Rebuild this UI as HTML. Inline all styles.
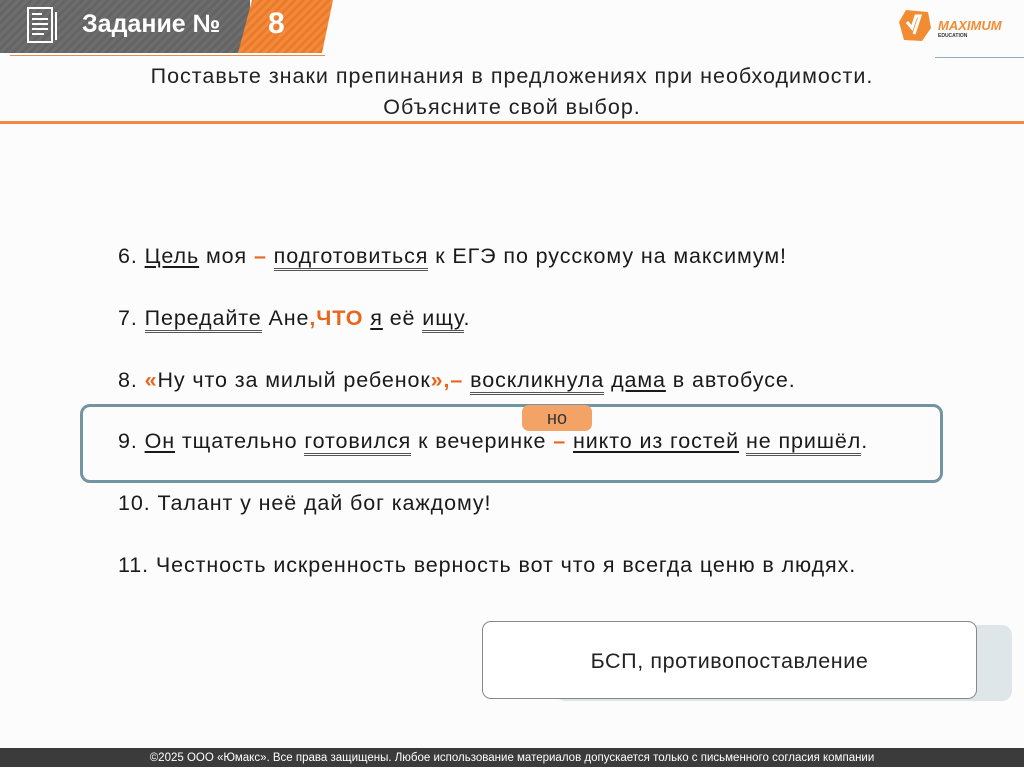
<!DOCTYPE html>
<html><head><meta charset="utf-8"><style>
body{margin:0;width:1024px;height:767px;position:relative;overflow:hidden;background:#fcfcfc;font-family:"Liberation Sans",sans-serif;color:#1a1a1a}
.abs{position:absolute}
.ln{position:absolute;left:118px;font-size:21.5px;letter-spacing:0.9px;white-space:nowrap;line-height:24px}
.s{text-decoration:underline;text-underline-offset:3px}
.p{border-bottom:3px double #555;padding-bottom:0}
.o{color:#e8661e;font-weight:bold}
</style></head><body>
<div class="abs" style="left:0;top:0;width:250px;height:53px;background:repeating-linear-gradient(135deg,#6d6d6d 0 3px,#646464 3px 6px)"></div>
<div class="abs" style="left:238px;top:0;width:95px;height:53px;background:repeating-linear-gradient(135deg,#f28a3c 0 3px,#ec7a2a 3px 6px);clip-path:polygon(14px 0,100% 0,84px 100%,0 100%)"></div>
<svg class="abs" style="left:26px;top:6px" width="36" height="40" viewBox="0 0 36 40"><rect x="2" y="2" width="24" height="34" fill="none" stroke="#fff" stroke-width="2"/><path d="M6 8h10M6 13h16M6 18h16M6 23h16M6 28h12" stroke="#fff" stroke-width="2"/><path d="M30 6v28" stroke="#fff" stroke-width="2"/></svg>
<div class="abs" style="left:82px;top:10px;font-size:25px;font-weight:bold;color:#fff">Задание №</div>
<div class="abs" style="left:268px;top:7px;font-size:30px;font-weight:bold;color:#fff">8</div>
<div class="abs" style="left:10px;top:55px;width:315px;height:1px;background:#ef8a45"></div>
<div class="abs" style="left:935px;top:57px;width:89px;height:1px;background:#8fb0c0"></div>
<svg class="abs" style="left:898px;top:8px" width="34" height="34" viewBox="0 0 34 34"><path d="M8 2L30 4L33 20L24 33L6 32L1 14Z" fill="#f28c33"/><path d="M9 14l5 6 4-12 4 0-6 18" stroke="#fff" stroke-width="3" fill="none"/></svg>
<div class="abs" style="left:938px;top:18px;font-size:13px;font-weight:bold;font-style:italic;color:#f28c33">MAXIMUM</div>
<div class="abs" style="left:938px;top:33px;font-size:5px;font-weight:bold;color:#333">EDUCATION</div>
<div class="abs" style="left:0;width:1024px;top:61px;text-align:center;font-size:21.5px;letter-spacing:1px;line-height:31px;color:#222">Поставьте знаки препинания в предложениях при необходимости.<br>Объясните свой выбор.</div>
<div class="abs" style="left:0;top:121px;width:1024px;height:3px;background:#ef8a45"></div>

<div class="ln" style="top:244px">6. <span class="s">Цель</span> моя <span class="o">–</span> <span class="p">подготовиться</span> к ЕГЭ по русскому на максимум!</div>
<div class="ln" style="top:306px">7. <span class="p">Передайте</span> Ане<span class="o">,ЧТО</span> <span class="s">я</span> её <span class="p">ищу</span>.</div>
<div class="ln" style="top:368px">8. <span class="o">«</span>Ну что за милый ребенок<span class="o">»,–</span> <span class="p">воскликнула</span> <span class="s">дама</span> в автобусе.</div>
<div class="abs" style="left:80px;top:404px;width:857px;height:73px;border:3px solid #7394a3;border-radius:10px"></div>
<div class="abs" style="left:522px;top:405px;width:70px;height:26px;background:#f4a366;border-radius:7px;text-align:center;font-size:18px;line-height:26px;color:#333">но</div>
<div class="ln" style="top:429px">9. <span class="s">Он</span> тщательно <span class="p">готовился</span> к вечеринке <span class="o">–</span> <span class="s">никто из гостей</span> <span class="p">не пришёл</span>.</div>
<div class="ln" style="top:491px">10. Талант у неё дай бог каждому!</div>
<div class="ln" style="top:553px">11. Честность искренность верность вот что я всегда ценю в людях.</div>

<div class="abs" style="left:555px;top:625px;width:457px;height:76px;background:#dfe6ea;border-radius:10px"></div>
<div class="abs" style="left:482px;top:621px;width:493px;height:76px;background:#fff;border:1.5px solid #888;border-radius:9px;text-align:center;line-height:78px;font-size:21.5px;letter-spacing:0.6px;color:#222">БСП, противопоставление</div>

<div class="abs" style="left:0;top:748px;width:1024px;height:19px;background:#3b3b3b;color:#fff;font-size:11.5px;line-height:20px;text-align:center">©2025 ООО «Юмакс». Все права защищены. Любое использование материалов допускается только с  письменного согласия компании</div>
</body></html>
